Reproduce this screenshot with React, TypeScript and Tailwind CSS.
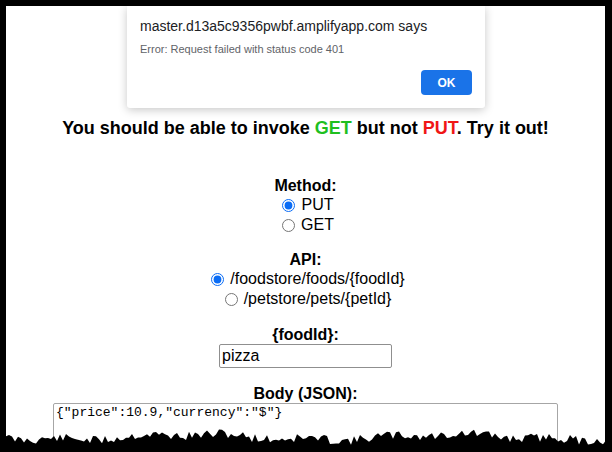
import React from "react";

// jagged "torn paper" edge along the bottom of the screenshot
const tear = (() => {
  let s = 11;
  const rnd = () => {
    s = (s * 9301 + 49297) % 233280;
    return s / 233280;
  };
  const pts: string[] = ["0,452"];
  for (let x = 0; x <= 612; x += 3) {
    const base = 437 + 2.5 * Math.sin(x / 41) + 1.5 * Math.sin(x / 13);
    pts.push(`${x},${(base + (rnd() - 0.5) * 9).toFixed(1)}`);
  }
  pts.push("612,452");
  return pts.join(" ");
})();

const Radio = ({ checked, label }: { checked?: boolean; label: string }) => (
  <label className="flex items-center h-[20px] text-[16px] text-black">
    <input
      type="radio"
      defaultChecked={checked}
      className="w-[13px] h-[13px] mr-[6px] accent-[#0a6cf5]"
    />
    {label}
  </label>
);

const App = () => {
  return (
    <div
      className="relative w-[612px] h-[452px] overflow-hidden bg-black pt-[6px] pl-[6px] pr-[7px]"
      style={{ fontFamily: '"Liberation Sans", Arial, sans-serif' }}
    >
      <div className="h-full bg-white flex flex-col items-center">
        <h2 className="mt-[110px] h-[24px] leading-[24px] text-[18px] font-bold text-black">
          You should be able to invoke <span className="text-[#1fbf1f]">GET</span> but not{" "}
          <span className="text-[#f01616]">PUT</span>. Try it out!
        </h2>

        <div className="mt-[37px] flex flex-col items-center">
          <div className="h-[18px] leading-[18px] text-[16px] font-bold">Method:</div>
          <div className="flex flex-col items-center ml-[5px]">
            <Radio checked label="PUT" />
            <Radio label="GET" />
          </div>
        </div>

        <div className="mt-[16px] flex flex-col items-center">
          <div className="h-[18px] leading-[18px] text-[16px] font-bold">API:</div>
          <div className="flex flex-col items-center ml-[5px]">
            <Radio checked label="/foodstore/foods/{foodId}" />
            <Radio label="/petstore/pets/{petId}" />
          </div>
        </div>

        <div className="mt-[17px] flex flex-col items-center">
          <div className="h-[18px] leading-[18px] text-[16px] font-bold">{"{foodId}:"}</div>
          <input
            type="text"
            defaultValue="pizza"
            className="w-[173px] h-[24px] border border-[#8f8f8f] rounded-[2px] px-[2px] text-[16px] text-black outline-none"
          />
        </div>

        <div className="mt-[17px] flex flex-col items-center">
          <div className="h-[18px] leading-[18px] text-[16px] font-bold">Body (JSON):</div>
          <textarea
            defaultValue={'{"price":10.9,"currency":"$"}'}
            className="w-[505px] h-[60px] border border-[#a6a6a6] rounded-[2px] px-[2px] py-[1px] text-[13px] leading-[16px] text-black resize-none outline-none"
            style={{ fontFamily: '"Liberation Mono", "Courier New", monospace' }}
          />
        </div>
      </div>

      {/* browser alert dialog */}
      <div className="absolute left-[127px] top-[6px] w-[358px] h-[102px] bg-white rounded-b-[3px] shadow-[0_2px_10px_rgba(0,0,0,0.22)] px-[13px]">
        <div className="mt-[11px] text-[14px] leading-[18px] text-[#202124]">
          master.d13a5c9356pwbf.amplifyapp.com says
        </div>
        <div className="mt-[7px] text-[11px] leading-[14px] text-[#5f6368]">
          Error: Request failed with status code 401
        </div>
        <div className="flex justify-end mt-[14px]">
          <button className="w-[51px] h-[25px] rounded-[4px] bg-[#1a73e8] text-white text-[12px] font-bold">
            OK
          </button>
        </div>
      </div>

      <svg
        className="absolute left-0 bottom-0"
        width="612"
        height="30"
        viewBox="0 422 612 30"
      >
        <polygon points={tear} fill="#000" />
      </svg>
    </div>
  );
};

export default App;
